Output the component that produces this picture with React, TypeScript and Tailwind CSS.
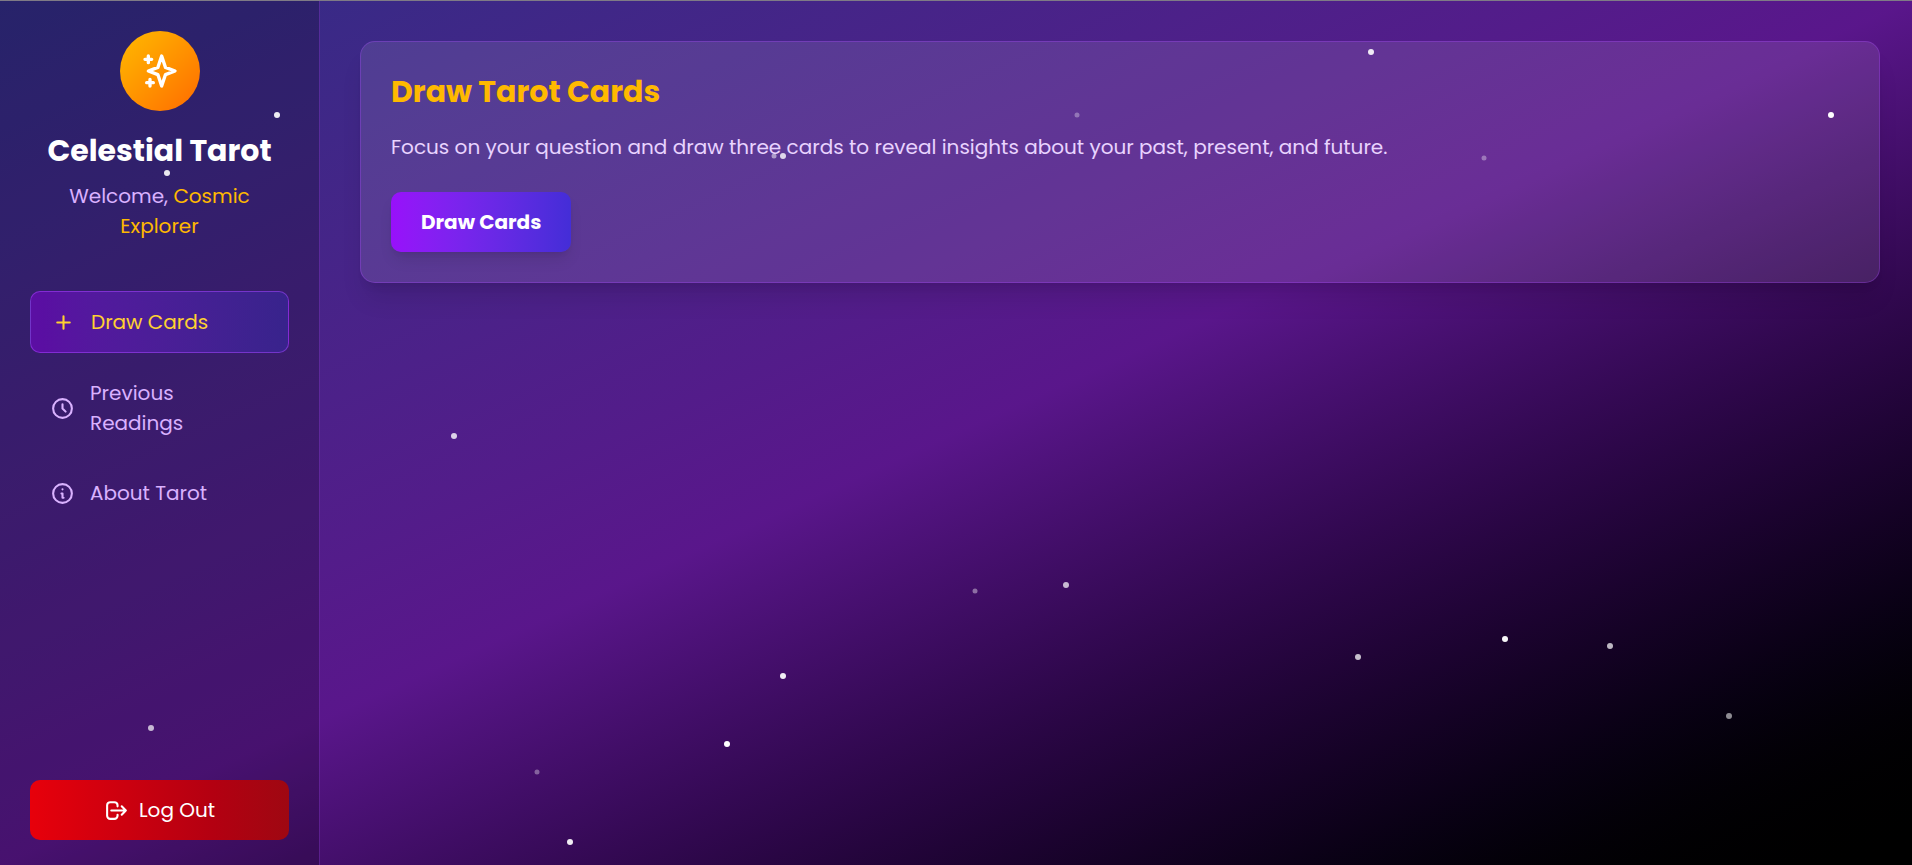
import type { ReactNode } from "react";

type IconProps = { d: string; className?: string };

function Icon({ d, className = "size-[25px]" }: IconProps) {
  return (
    <svg
      className={`shrink-0 ${className}`}
      viewBox="0 0 24 24"
      fill="none"
      stroke="currentColor"
      strokeWidth={2}
      strokeLinecap="round"
      strokeLinejoin="round"
      aria-hidden="true"
    >
      <path d={d} />
    </svg>
  );
}

const icons = {
  sparkles:
    "M5 3v4M3 5h4M6 17v4m-2-2h4m5-16l2.286 6.857L21 12l-5.714 2.143L13 21l-2.286-6.857L5 12l5.714-2.143L13 3z",
  plus: "M12 6v6m0 0v6m0-6h6m-6 0H6",
  clock: "M12 8v4l3 3m6-3a9 9 0 11-18 0 9 9 0 0118 0z",
  info: "M13 16h-1v-4h-1m1-4h.01M21 12a9 9 0 11-18 0 9 9 0 0118 0z",
  logout:
    "M17 16l4-4m0 0l-4-4m4 4H7m6 4v1a3 3 0 01-3 3H6a3 3 0 01-3-3V7a3 3 0 013-3h4a3 3 0 013 3v1",
};

// Star centres as percentages of the sky, with size in pixels and opacity.
const stars = [
  { x: 14.51, y: 13.25, size: 6, opacity: 0.92 },
  { x: 8.71, y: 19.96, size: 6, opacity: 0.9 },
  { x: 7.92, y: 84.12, size: 6, opacity: 0.7 },
  { x: 40.46, y: 17.99, size: 5, opacity: 0.5 },
  { x: 40.93, y: 17.99, size: 6, opacity: 0.8 },
  { x: 56.35, y: 13.14, size: 5, opacity: 0.32 },
  { x: 71.68, y: 5.85, size: 6, opacity: 0.9 },
  { x: 77.59, y: 18.22, size: 5, opacity: 0.35 },
  { x: 95.74, y: 13.14, size: 6, opacity: 1 },
  { x: 23.77, y: 50.36, size: 6, opacity: 0.8 },
  { x: 40.93, y: 78.11, size: 6, opacity: 0.93 },
  { x: 38, y: 85.97, size: 6, opacity: 1 },
  { x: 28.11, y: 89.21, size: 5, opacity: 0.35 },
  { x: 29.79, y: 97.3, size: 6, opacity: 0.93 },
  { x: 50.97, y: 68.28, size: 5, opacity: 0.4 },
  { x: 55.73, y: 67.59, size: 6, opacity: 0.72 },
  { x: 71.05, y: 75.91, size: 6, opacity: 0.75 },
  { x: 78.69, y: 73.83, size: 6, opacity: 0.97 },
  { x: 84.23, y: 74.64, size: 6, opacity: 0.72 },
  { x: 90.45, y: 82.73, size: 6, opacity: 0.55 },
];

function StarField() {
  return (
    <div className="pointer-events-none absolute inset-0 z-10 overflow-hidden">
      {stars.map((star) => (
        <span
          key={`${star.x}-${star.y}`}
          className="absolute -translate-1/2 rounded-full bg-white"
          style={{
            left: `${star.x}%`,
            top: `${star.y}%`,
            width: star.size,
            height: star.size,
            opacity: star.opacity,
          }}
        />
      ))}
    </div>
  );
}

type NavItemProps = { icon: string; active?: boolean; children: ReactNode };

function NavItem({ icon, active = false, children }: NavItemProps) {
  return (
    <li>
      <button
        type="button"
        aria-current={active ? "page" : undefined}
        className={
          active
            ? "flex w-full items-center gap-[15px] rounded-[10px] border border-purple-500/50 bg-linear-to-r from-purple-700/50 to-indigo-800/50 px-5 py-[15px] text-left text-amber-300"
            : "flex w-full items-center gap-[15px] rounded-[10px] px-5 py-[15px] text-left text-purple-300"
        }
      >
        <Icon d={icon} />
        <span>{children}</span>
      </button>
    </li>
  );
}

export default function App() {
  return (
    <div className="relative flex min-h-screen border-t border-[#7f7b86] bg-linear-to-br from-indigo-900 via-purple-900 to-black bg-origin-border font-[Poppins,Inter,sans-serif] text-[20px] leading-[30px] text-white">
      <aside className="flex w-80 shrink-0 flex-col border-r border-purple-500/30 bg-black/20 px-[30px] pt-[30px] pb-[25px]">
        <header className="flex flex-col items-center text-center">
          <div className="flex size-20 items-center justify-center rounded-full bg-linear-to-br from-amber-400 to-orange-500">
            <Icon d={icons.sparkles} className="size-10" />
          </div>
          <h1 className="mt-5 text-[30px] leading-10 font-bold">Celestial Tarot</h1>
          <p className="mt-[10px] text-purple-300">
            Welcome, <span className="text-amber-400">Cosmic Explorer</span>
          </p>
        </header>

        <nav className="mt-[50px]">
          <ul className="flex flex-col gap-[10px]">
            <NavItem icon={icons.plus} active>
              Draw Cards
            </NavItem>
            <NavItem icon={icons.clock}>Previous Readings</NavItem>
            <NavItem icon={icons.info}>About Tarot</NavItem>
          </ul>
        </nav>

        <button
          type="button"
          className="mt-auto flex w-full items-center justify-center gap-[10px] rounded-[10px] bg-linear-to-r from-red-600 to-red-800 py-[15px]"
        >
          <Icon d={icons.logout} />
          Log Out
        </button>
      </aside>

      <main className="min-w-0 flex-1 py-10 pr-8 pl-10">
        <section className="rounded-[15px] border border-purple-500/30 bg-white/10 p-[30px] shadow-xl">
          <h2 className="text-[30px] leading-10 font-bold text-amber-400">Draw Tarot Cards</h2>
          <p className="mt-5 text-purple-200">
            Focus on your question and draw three cards to reveal insights about your past,
            present, and future.
          </p>
          <button
            type="button"
            className="mt-[30px] rounded-[10px] bg-linear-to-r from-purple-600 to-indigo-700 px-[30px] py-[15px] font-bold shadow-lg"
          >
            Draw Cards
          </button>
        </section>
      </main>

      <StarField />
    </div>
  );
}
